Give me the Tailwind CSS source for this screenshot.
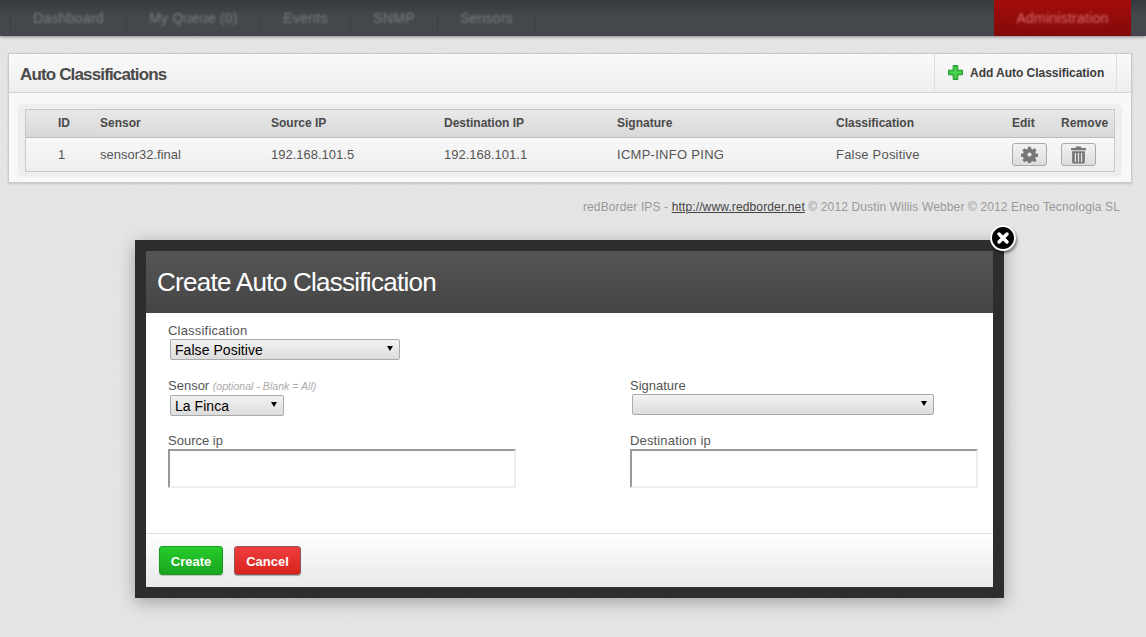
<!DOCTYPE html>
<html lang="en">
<head>
    <meta charset="UTF-8">
    <meta name="viewport" content="width=device-width, initial-scale=1.0">
    <title>Auto Classifications</title>
    <script src="https://cdn.jsdelivr.net/npm/@tailwindcss/browser@4"></script>
</head>
<body class="relative h-[637px] overflow-hidden bg-[#e7e7e7] font-['Liberation_Sans',Arial,sans-serif] text-[#555]">
    <!-- paper grain of the page background -->
    <svg class="pointer-events-none absolute inset-0" width="1146" height="637">
        <filter id="grain"><feTurbulence type="fractalNoise" baseFrequency="0.7" numOctaves="2"/><feColorMatrix values="0 0 0 0 0.5  0 0 0 0 0.5  0 0 0 0 0.5  0 0 0 0.12 0"/></filter>
        <rect width="1146" height="637" filter="url(#grain)"/>
    </svg>

    <!-- top nav, blurred behind the modal overlay -->
    <nav class="relative flex h-[36px] justify-between bg-gradient-to-b from-[#37393c] via-[#45494d] to-[#43474b] pl-[10px] pr-[15px] text-[14px] tracking-[0.25px] shadow-[0_1px_3px_rgba(0,0,0,0.4)]">
        <div class="flex">
            <a class="flex w-[117px] items-center justify-center border-x border-[#3d4044] text-[#777b7f]"><span class="blur-[1px]">Dashboard</span></a>
            <a class="flex w-[134px] items-center justify-center border-r border-[#3d4044] text-[#777b7f]"><span class="blur-[1px]">My Queue (0)</span></a>
            <a class="flex w-[90px] items-center justify-center border-r border-[#3d4044] text-[#777b7f]"><span class="blur-[1px]">Events</span></a>
            <a class="flex w-[87px] items-center justify-center border-r border-[#3d4044] text-[#777b7f]"><span class="blur-[1px]">SNMP</span></a>
            <a class="flex w-[98px] items-center justify-center border-r border-[#3d4044] text-[#777b7f]"><span class="blur-[1px]">Sensors</span></a>
        </div>
        <a class="flex w-[137px] items-center justify-center bg-gradient-to-b from-[#a50c0c] to-[#830909] text-[#d87070]"><span class="blur-[1px]">Administration</span></a>
    </nav>

    <main class="relative px-[8px] pt-[17px]">
        <section class="w-[1124px] border border-[#c9c9c9] bg-[#f8f8f8] shadow-[0_1px_2px_rgba(0,0,0,0.15)]">
            <header class="flex h-[39px] items-stretch justify-between border-b border-[#d4d4d4] bg-gradient-to-b from-[#fafafa] to-[#eeeeee]">
                <h1 class="flex items-center pl-[11px] pt-[3px] text-[17px] font-bold tracking-[-0.85px] text-[#4a4a4a]">Auto Classifications</h1>
                <a class="mr-[14px] flex w-[183px] items-center gap-[7px] border-x border-[#dedede] pl-[13px] text-[12px] font-bold tracking-[-0.03px] text-[#3c3c3c]">
                    <svg class="mb-[2px]" width="15" height="15" viewBox="0 0 16 16"><path d="M5.500 0.500h5v5h5v5h-5v5h-5v-5h-5v-5h5z" fill="#35b83a" stroke="#1f9a27" stroke-width="1"/><path d="M7 2h2v5h5v2H9v5H7V9H2V7h5z" fill="#4bd452"/></svg>
                    Add Auto Classification
                </a>
            </header>
            <div class="mx-[9px] mb-[5px] mt-[11px] rounded-[5px] bg-[#eeeeee] py-[5px] pl-[7px] pr-[5px]">
                <table class="w-[1090px] table-fixed border-collapse border border-[#c8c8c8] text-left">
                    <thead>
                        <tr class="h-[28px] border-b border-[#bcbcbc] bg-gradient-to-b from-[#e8e8e8] to-[#d8d8d8] text-[12px] font-bold text-[#4a4a4a]">
                            <th class="w-[74.5px] pb-[2px] pl-[32px]">ID</th>
                            <th class="w-[171px] pb-[2px]">Sensor</th>
                            <th class="w-[173px] pb-[2px]">Source IP</th>
                            <th class="w-[173px] pb-[2px]">Destination IP</th>
                            <th class="w-[219px] pb-[2px]">Signature</th>
                            <th class="w-[176px] pb-[2px]">Classification</th>
                            <th class="w-[49px] pb-[2px]">Edit</th>
                            <th class="pb-[2px] tracking-[0.1px]">Remove</th>
                        </tr>
                    </thead>
                    <tbody>
                        <tr class="h-[34px] bg-gradient-to-b from-[#f8f8f8] to-[#eeeeee] text-[13px] text-[#555]">
                            <td class="pl-[32px]">1</td>
                            <td>sensor32.final</td>
                            <td>192.168.101.5</td>
                            <td>192.168.101.1</td>
                            <td class="tracking-[0.28px]">ICMP-INFO PING</td>
                            <td class="tracking-[0.2px]">False Positive</td>
                            <td>
                                <button class="flex h-[23px] w-[35px] items-center justify-center rounded-[3px] border border-[#aaa] bg-gradient-to-b from-[#f2f2f2] to-[#dcdcdc]">
                                    <svg width="17" height="17" viewBox="0 0 24 24" fill="#777"><path fill-rule="evenodd" d="M10 1h4l.6 3.100 2 .8 2.600-1.800 2.800 2.800-1.800 2.600.8 2 3 .5v4l-3 .6-.8 2 1.800 2.600-2.800 2.800-2.600-1.800-2 .8-.6 3h-4l-.6-3-2-.8-2.600 1.800-2.800-2.800 1.800-2.600-.8-2-3.100-.6v-4l3.100-.5.8-2-1.800-2.600 2.800-2.800 2.600 1.800 2-.8zM12 9a3 3 0 1 0 0 6 3 3 0 0 0 0-6z"/></svg>
                                </button>
                            </td>
                            <td>
                                <button class="flex h-[23px] w-[35px] items-center justify-center rounded-[3px] border border-[#aaa] bg-gradient-to-b from-[#f2f2f2] to-[#dcdcdc]">
                                    <svg width="17" height="18" viewBox="0 0 16 17" fill="#777"><path d="M5.500 0.500h5v1.500H15v2H1V2h4.500z"/><path fill-rule="evenodd" d="M2 5h12v10.500l-1 1H3l-1-1zM4.500 6.500v8.500h1.200V6.500zM7.400 6.500v8.500h1.200V6.500zM10.300 6.500v8.500h1.200V6.500z"/></svg>
                                </button>
                            </td>
                        </tr>
                    </tbody>
                </table>
            </div>
        </section>
        <p class="mt-[15px] pr-[18px] text-right text-[12px] tracking-[0.13px] text-[#999]">redBorder IPS - <a class="text-[#444] underline">http://www.redborder.net</a> © 2012 Dustin Willis Webber © 2012 Eneo Tecnologia SL</p>
    </main>

    <!-- modal -->
    <div class="absolute left-[135px] top-[240px] w-[869px] border-[11px] border-[#2d2d2d] shadow-[0_4px_16px_rgba(0,0,0,0.3)]">
        <button class="absolute right-[-23px] top-[-26px] z-10 flex h-[26px] w-[26px] items-center justify-center rounded-full border-2 border-white bg-black shadow-[1px_2px_3px_rgba(0,0,0,0.5)]">
            <svg width="14" height="14" viewBox="0 0 14 14"><path d="M3 3l8 8M11 3l-8 8" stroke="#fff" stroke-width="3.500" stroke-linecap="round"/></svg>
        </button>
        <div class="flex h-[62px] items-center bg-gradient-to-b from-[#555555] to-[#454545] pl-[11px] text-[26px] tracking-[-0.72px] text-white">Create Auto Classification</div>
        <form class="h-[220px] bg-white pl-[22px] pt-[10px] text-[13px] text-[#555]">
            <label class="block leading-[15px] tracking-[0.2px]">Classification</label>
            <div class="relative ml-[2px] mt-[1px] h-[21px] w-[230px] rounded-[2px] border border-[#aaa] bg-gradient-to-b from-[#f2f2f2] to-[#dcdcdc]">
                <select class="block h-[17px] w-full appearance-none pl-[4px] text-[14px] tracking-[0.05px] text-black"><option>False Positive</option></select>
                <span class="absolute right-[6px] top-[6px] border-x-[3px] border-t-[5px] border-x-transparent border-t-black"></span>
            </div>
            <div class="mt-[18px] grid grid-cols-[462px_1fr]">
                <div>
                    <label class="block leading-[15px]">Sensor <em class="text-[10.6px] text-[#aaa]">(optional - Blank = All)</em></label>
                    <div class="relative ml-[2px] mt-[1px] h-[21px] w-[114px] rounded-[2px] border border-[#aaa] bg-gradient-to-b from-[#f2f2f2] to-[#dcdcdc]">
                        <select class="block h-[17px] w-full appearance-none pl-[4px] text-[14px] tracking-[0.05px] text-black"><option>La Finca</option></select>
                        <span class="absolute right-[6px] top-[6px] border-x-[3px] border-t-[5px] border-x-transparent border-t-black"></span>
                    </div>
                </div>
                <div>
                    <label class="block leading-[15px]">Signature</label>
                    <div class="relative ml-[2px] mt-[1px] h-[21px] w-[302px] rounded-[2px] border border-[#aaa] bg-gradient-to-b from-[#f2f2f2] to-[#dcdcdc]">
                        <select class="block h-[17px] w-full appearance-none text-[14px] text-black"><option></option></select>
                        <span class="absolute right-[6px] top-[6px] border-x-[3px] border-t-[5px] border-x-transparent border-t-black"></span>
                    </div>
                </div>
                <div class="mt-[17px]">
                    <label class="mb-[1px] block leading-[15px]">Source ip</label>
                    <input type="text" class="block h-[39px] w-[348px] border-2 border-[#999_#eee_#eee_#999] bg-white">
                </div>
                <div class="mt-[17px]">
                    <label class="mb-[1px] block leading-[15px] tracking-[0.15px]">Destination ip</label>
                    <input type="text" class="block h-[39px] w-[348px] border-2 border-[#999_#eee_#eee_#999] bg-white">
                </div>
            </div>
        </form>
        <footer class="flex h-[54px] items-center gap-[11px] border-t border-[#ddd] bg-gradient-to-b from-white to-[#e9e9e9] pl-[13px]">
            <button class="h-[29px] w-[64px] rounded-[3px] border border-[#1a9a1f] bg-gradient-to-b from-[#25cc2b] to-[#1ba520] pt-[2px] text-[13px] font-bold text-white shadow-[0_1px_1px_rgba(0,0,0,0.2)]">Create</button>
            <button class="h-[29px] w-[67px] rounded-[3px] border border-[#8a5a5a] bg-gradient-to-b from-[#ee3d3d] to-[#d9221a] pt-[2px] text-[13px] font-bold text-white shadow-[0_1px_1px_rgba(0,0,0,0.3)]">Cancel</button>
        </footer>
    </div>
</body>
</html>
